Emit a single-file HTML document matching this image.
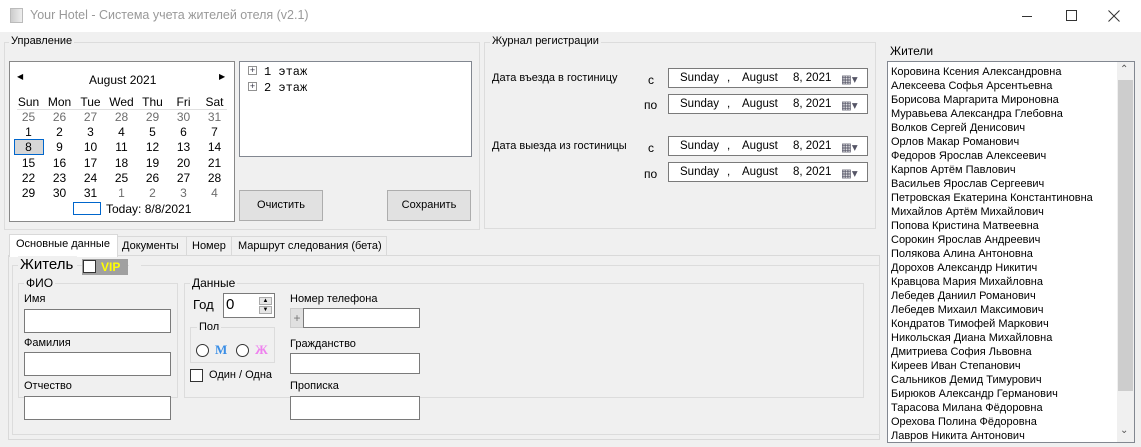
<!DOCTYPE html><html><head><meta charset="utf-8"><style>
*{box-sizing:border-box}
body{margin:0;width:1141px;height:447px;background:#f0f0f0;font-family:"Liberation Sans",sans-serif;font-size:11px;color:#000;position:relative;overflow:hidden}
.a{position:absolute}
.gb{position:absolute;border:1px solid #dcdcdc}
.gl{position:absolute;background:#f0f0f0;padding:0 2px;font-size:11px}
.tb{position:absolute;background:#fff;border:1px solid #7a7a7a}
.btn{position:absolute;background:#e1e1e1;border:1px solid #adadad;text-align:center;line-height:28px;font-size:11px}
.dp{position:absolute;left:668px;width:200px;height:20px;background:#fff;border:1px solid #7a7a7a;font-size:11.5px}
.dp span{position:absolute;top:3px}
.cal{table-layout:fixed}
.cal td{text-align:center;height:15px;padding:0;font-size:12px;width:31px}
.g{color:#6d6d6d}
</style></head><body>
<div class="a" style="left:0;top:0;width:1141px;height:32px;background:#fff"></div>
<div class="a" style="left:10px;top:8px;width:13px;height:15px;background:linear-gradient(90deg,#ccc,#eee);border:1px solid #bbb"></div>
<div class="a" style="left:30px;top:8px;font-size:12.5px;color:#999">Your Hotel - Система учета жителей отеля (v2.1)</div>
<div class="a" style="left:1022px;top:16px;width:10px;height:1px;background:#333"></div>
<div class="a" style="left:1066px;top:10px;width:11px;height:11px;border:1px solid #333"></div>
<svg class="a" style="left:1108px;top:10px" width="12" height="12"><path d="M0.5 0.5L11.5 11.5M11.5 0.5L0.5 11.5" stroke="#333" stroke-width="1"/></svg>

<div class="gb" style="left:4px;top:42px;width:476px;height:188px"></div>
<div class="gl" style="left:9px;top:35px">Управление</div>
<div class="a" style="left:9px;top:61px;width:226px;height:161px;background:#fff;border:1px solid #888"></div>
<div class="a" style="left:17px;top:72px;font-size:8px">◀</div>
<div class="a" style="left:219px;top:72px;font-size:8px">▶</div>
<div class="a" style="left:89px;top:73px;font-size:12px">August 2021</div>
<table class="cal a" style="left:13px;top:94px;width:217px;border-collapse:collapse">
<tr><td>Sun</td><td>Mon</td><td>Tue</td><td>Wed</td><td>Thu</td><td>Fri</td><td>Sat</td></tr>
<tr class="g"><td>25</td><td>26</td><td>27</td><td>28</td><td>29</td><td>30</td><td>31</td></tr>
<tr><td>1</td><td>2</td><td>3</td><td>4</td><td>5</td><td>6</td><td>7</td></tr>
<tr><td><div style="width:30px;height:16px;background:#d6d6d6;border:1px solid #0066cc;margin:0 auto">8</div></td><td>9</td><td>10</td><td>11</td><td>12</td><td>13</td><td>14</td></tr>
<tr><td>15</td><td>16</td><td>17</td><td>18</td><td>19</td><td>20</td><td>21</td></tr>
<tr><td>22</td><td>23</td><td>24</td><td>25</td><td>26</td><td>27</td><td>28</td></tr>
<tr><td>29</td><td>30</td><td>31</td><td class="g">1</td><td class="g">2</td><td class="g">3</td><td class="g">4</td></tr>
</table>
<div class="a" style="left:17px;top:109px;width:210px;height:1px;background:#e0e0e0"></div>
<div class="a" style="left:73px;top:202px;width:28px;height:13px;border:1px solid #0066cc"></div>
<div class="a" style="left:106px;top:202px;font-size:12px">Today: 8/8/2021</div>
<div class="a" style="left:239px;top:61px;width:233px;height:96px;background:#fff;border:1px solid #828790"></div>
<div class="a" style="left:248px;top:66px;width:9px;height:9px;border:1px solid #919191;font-size:9px;line-height:7px;text-align:center;color:#334">+</div>
<div class="a" style="left:248px;top:82px;width:9px;height:9px;border:1px solid #919191;font-size:9px;line-height:7px;text-align:center;color:#334">+</div>
<div class="a" style="left:264px;top:64px;font-family:'Liberation Mono',monospace;font-size:12px;line-height:16px">1 этаж<br>2 этаж</div>
<div class="btn" style="left:239px;top:190px;width:84px;height:31px">Очистить</div>
<div class="btn" style="left:387px;top:190px;width:84px;height:31px">Сохранить</div>

<div class="gb" style="left:484px;top:42px;width:392px;height:187px"></div>
<div class="gl" style="left:490px;top:35px">Журнал регистрации</div>
<div class="a" style="left:492px;top:72px">Дата въезда в гостиницу</div>
<div class="a" style="left:492px;top:140px">Дата выезда из гостиницы</div>
<div class="a" style="left:648px;top:73px;font-size:12px">с</div>
<div class="a" style="left:644px;top:98px;font-size:12px">по</div>
<div class="a" style="left:648px;top:141px;font-size:12px">с</div>
<div class="a" style="left:644px;top:167px;font-size:12px">по</div>
<div class="dp" style="top:68px"><span style="left:11px">Sunday</span><span style="left:58px">,</span><span style="left:73px">August</span><span style="left:124px">8, 2021</span><span style="left:172px;color:#556">▦▾</span></div>
<div class="dp" style="top:94px"><span style="left:11px">Sunday</span><span style="left:58px">,</span><span style="left:73px">August</span><span style="left:124px">8, 2021</span><span style="left:172px;color:#556">▦▾</span></div>
<div class="dp" style="top:136px"><span style="left:11px">Sunday</span><span style="left:58px">,</span><span style="left:73px">August</span><span style="left:124px">8, 2021</span><span style="left:172px;color:#556">▦▾</span></div>
<div class="dp" style="top:162px"><span style="left:11px">Sunday</span><span style="left:58px">,</span><span style="left:73px">August</span><span style="left:124px">8, 2021</span><span style="left:172px;color:#556">▦▾</span></div>

<div class="a" style="left:890px;top:44px;font-size:12px">Жители</div>
<div class="a" style="left:887px;top:61px;width:248px;height:382px;background:#fff;border:1px solid #828790"></div>
<div class="a" style="left:1117px;top:62px;width:17px;height:380px;background:#f0f0f0"></div>
<div class="a" style="left:1118px;top:80px;width:15px;height:311px;background:#cdcdcd"></div>
<div class="a" style="left:1120px;top:64px;font-size:10px;color:#555">⌃</div>
<div class="a" style="left:1120px;top:425px;font-size:10px;color:#555">⌄</div>
<div class="a" style="left:891px;top:65px;font-size:11px;line-height:14px;white-space:nowrap">Коровина Ксения Александровна<br>Алексеева Софья Арсентьевна<br>Борисова Маргарита Мироновна<br>Муравьева Александра Глебовна<br>Волков Сергей Денисович<br>Орлов Макар Романович<br>Федоров Ярослав Алексеевич<br>Карпов Артём Павлович<br>Васильев Ярослав Сергеевич<br>Петровская Екатерина Константиновна<br>Михайлов Артём Михайлович<br>Попова Кристина Матвеевна<br>Сорокин Ярослав Андреевич<br>Полякова Алина Антоновна<br>Дорохов Александр Никитич<br>Кравцова Мария Михайловна<br>Лебедев Даниил Романович<br>Лебедев Михаил Максимович<br>Кондратов Тимофей Маркович<br>Никольская Диана Михайловна<br>Дмитриева София Львовна<br>Киреев Иван Степанович<br>Сальников Демид Тимурович<br>Бирюков Александр Германович<br>Тарасова Милана Фёдоровна<br>Орехова Полина Фёдоровна<br>Лавров Никита Антонович</div>

<div class="a" style="left:8px;top:255px;width:872px;height:185px;background:#fff;border:1px solid #d9d9d9"></div>
<div class="a" style="left:9px;top:256px;width:870px;height:183px;background:#f0f0f0"></div>
<div class="a" style="left:117px;top:236px;width:270px;height:20px;border:1px solid #d9d9d9;background:#f0f0f0"></div>
<div class="a" style="left:186px;top:236px;width:1px;height:20px;background:#d9d9d9"></div>
<div class="a" style="left:231px;top:236px;width:1px;height:20px;background:#d9d9d9"></div>
<div class="a" style="left:9px;top:234px;width:109px;height:23px;background:#fff;border:1px solid #d9d9d9;border-bottom:none"></div>
<div class="a" style="left:16px;top:238px">Основные данные</div>
<div class="a" style="left:122px;top:240px">Документы</div>
<div class="a" style="left:192px;top:240px">Номер</div>
<div class="a" style="left:238px;top:240px">Маршрут следования (бета)</div>

<div class="gb" style="left:12px;top:265px;width:868px;height:170px"></div>
<div class="gl" style="left:18px;top:256px;font-size:15px;padding-right:4px">Житель</div>
<div class="a" style="left:82px;top:259px;width:46px;height:16px;background:#a0a0a0"></div>
<div class="a" style="left:83px;top:260px;width:13px;height:13px;background:#fff;border:1px solid #333"></div>
<div class="a" style="left:101px;top:260px;color:#ff0;font-weight:bold;font-size:12px">VIP</div>
<div class="a" style="left:129px;top:265px;width:12px;height:2px;background:#f0f0f0"></div>

<div class="gb" style="left:18px;top:283px;width:160px;height:115px"></div>
<div class="gl" style="left:24px;top:276px;font-size:12px">ФИО</div>
<div class="a" style="left:24px;top:293px">Имя</div>
<div class="tb" style="left:24px;top:309px;width:147px;height:24px"></div>
<div class="a" style="left:24px;top:337px">Фамилия</div>
<div class="tb" style="left:24px;top:352px;width:147px;height:24px"></div>
<div class="a" style="left:24px;top:380px">Отчество</div>
<div class="tb" style="left:24px;top:396px;width:147px;height:24px"></div>

<div class="gb" style="left:184px;top:283px;width:680px;height:115px"></div>
<div class="gl" style="left:190px;top:276px;font-size:12px">Данные</div>
<div class="a" style="left:193px;top:297px;font-size:13px">Год</div>
<div class="a" style="left:223px;top:293px;width:52px;height:25px;background:#fff;border:1px solid #7a7a7a;font-size:15px;padding-left:2px;line-height:22px">0</div>
<div class="a" style="left:259px;top:297px;width:13px;height:8px;background:#e6e6e6;border:1px solid #aaa;font-size:6px;text-align:center;line-height:6px">▲</div>
<div class="a" style="left:259px;top:306px;width:13px;height:8px;background:#e6e6e6;border:1px solid #aaa;font-size:6px;text-align:center;line-height:6px">▼</div>
<div class="gb" style="left:190px;top:327px;width:85px;height:36px"></div>
<div class="gl" style="left:197px;top:321px;font-size:11px">Пол</div>
<div class="a" style="left:196px;top:344px;width:13px;height:13px;border:1px solid #333;border-radius:50%;background:#fff"></div>
<div class="a" style="left:215px;top:342px;color:#3a8ee6;font-weight:bold;font-family:'Liberation Serif',serif;font-size:13px">М</div>
<div class="a" style="left:236px;top:344px;width:13px;height:13px;border:1px solid #333;border-radius:50%;background:#fff"></div>
<div class="a" style="left:255px;top:342px;color:#ee82ee;font-weight:bold;font-family:'Liberation Serif',serif;font-size:13px">Ж</div>
<div class="a" style="left:190px;top:369px;width:13px;height:13px;background:#fff;border:1px solid #333"></div>
<div class="a" style="left:209px;top:369px">Один / Одна</div>
<div class="a" style="left:290px;top:293px">Номер телефона</div>
<div class="a" style="left:290px;top:308px;width:14px;height:20px;background:#e0e0e0;border:1px solid #ccc;color:#777;text-align:center;line-height:18px;font-size:12px">+</div>
<div class="tb" style="left:303px;top:308px;width:117px;height:20px"></div>
<div class="a" style="left:290px;top:338px">Гражданство</div>
<div class="tb" style="left:290px;top:353px;width:130px;height:21px"></div>
<div class="a" style="left:290px;top:380px">Прописка</div>
<div class="tb" style="left:290px;top:396px;width:130px;height:24px"></div>
</body></html>
